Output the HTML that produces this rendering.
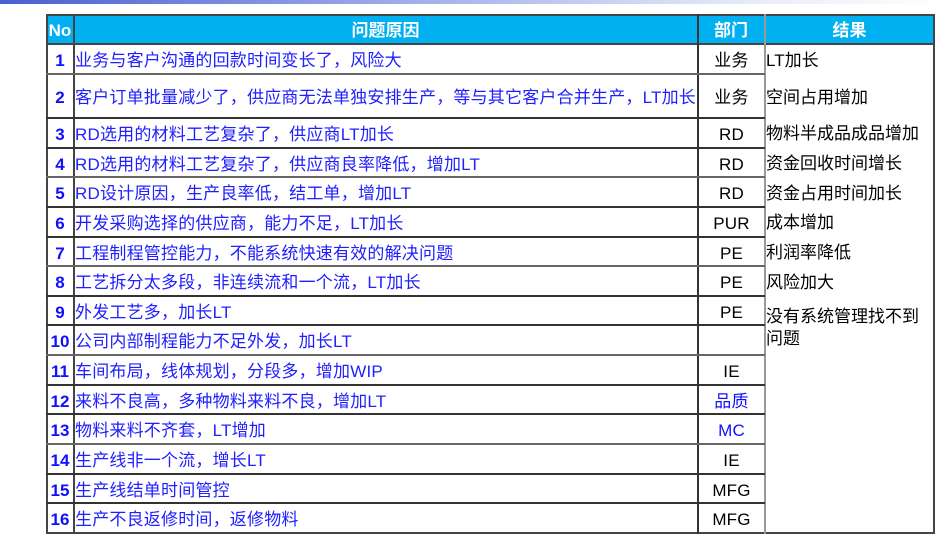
<!DOCTYPE html>
<html><head><meta charset="utf-8"><style>
*{margin:0;padding:0;box-sizing:border-box}
body{width:945px;height:547px;background:#fff;position:relative;overflow:hidden;font-family:"Liberation Sans","Noto Sans CJK SC",sans-serif}
.bar{position:absolute;left:0;top:0;width:945px;height:4px;background:linear-gradient(90deg,#4a5fd0,#9aa8e8 40%,#e8ecf8 80%,#fff)}
.hd{position:absolute;top:15px;height:29px;background:#00b0f0;color:#fff;font-weight:bold;font-size:17px;line-height:31px;text-align:center}
.c{position:absolute;font-size:17px;white-space:nowrap;line-height:20px;letter-spacing:0.2px}
.n{color:#1010ff;text-align:center;width:28px;left:46px;font-weight:bold;letter-spacing:0}
.r{color:#2020ff;left:75px}
.d{color:#000;text-align:center;left:698px;width:67px}
.res{position:absolute;left:766px;color:#000;font-size:17px;line-height:22px;white-space:nowrap}
.h{position:absolute;height:2px;background:#444}
.v{position:absolute;width:2px;background:#444}
</style></head><body>
<div class="bar"></div>
<div class="hd" style="left:46px;width:28px">No</div>
<div class="hd" style="left:74px;width:623px">问题原因</div>
<div class="hd" style="left:697px;width:68px">部门</div>
<div class="hd" style="left:765px;width:169px">结果</div>
<div class="h" style="left:46px;top:14px;width:889px"></div>
<div class="h" style="left:46px;top:43px;width:889px"></div>
<div class="h" style="left:46px;top:532px;width:889px"></div>
<div class="v" style="left:46px;top:14px;height:520px"></div>
<div class="v" style="left:73px;top:14px;height:520px"></div>
<div class="v" style="left:697px;top:14px;height:520px;background:#333"></div>
<div class="v" style="left:764px;top:14px;height:520px;background:#999"></div>
<div class="v" style="left:933px;top:14px;height:520px"></div>
<div id="rows"></div>
<script>
var b=[44,74,118,148,177,207,237,266,296,325,355,385,414,444,474,503,533];
var r=["业务与客户沟通的回款时间变长了，风险大","客户订单批量减少了，供应商无法单独安排生产，等与其它客户合并生产，LT加长","RD选用的材料工艺复杂了，供应商LT加长","RD选用的材料工艺复杂了，供应商良率降低，增加LT","RD设计原因，生产良率低，结工单，增加LT","开发采购选择的供应商，能力不足，LT加长","工程制程管控能力，不能系统快速有效的解决问题","工艺拆分太多段，非连续流和一个流，LT加长","外发工艺多，加长LT","公司内部制程能力不足外发，加长LT","车间布局，线体规划，分段多，增加WIP","来料不良高，多种物料来料不良，增加LT","物料来料不齐套，LT增加","生产线非一个流，增长LT","生产线结单时间管控","生产不良返修时间，返修物料"];
var d=["业务","业务","RD","RD","RD","PUR","PE","PE","PE","","IE","品质","MC","IE","MFG","MFG"];
var h="";
for(var i=0;i<16;i++){var t=b[i],bt=b[i+1],m=(t+bt)/2-8;
if(i>0)h+='<div class="h" style="left:46px;top:'+(t-1)+'px;width:719px;background:'+(i%3==1?'#666':'#333')+'"></div>';
h+='<div class="c n" style="top:'+m+'px">'+(i+1)+'</div>';
h+='<div class="c r" style="top:'+m+'px">'+r[i]+'</div>';
h+='<div class="c d" style="top:'+m+'px;color:'+((i==11||i==12)?'#1010ff':'#000')+'">'+d[i]+'</div>';}
var rs=[["LT加长",50],["空间占用增加",87],["物料半成品成品增加",123],["资金回收时间增长",153],["资金占用时间加长",183],["成本增加",212],["利润率降低",242],["风险加大",272],["没有系统管理找不到<br>问题",306]];
for(var j=0;j<rs.length;j++)h+='<div class="res" style="top:'+rs[j][1]+'px">'+rs[j][0]+'</div>';
document.getElementById("rows").innerHTML=h;
</script>
</body></html>
